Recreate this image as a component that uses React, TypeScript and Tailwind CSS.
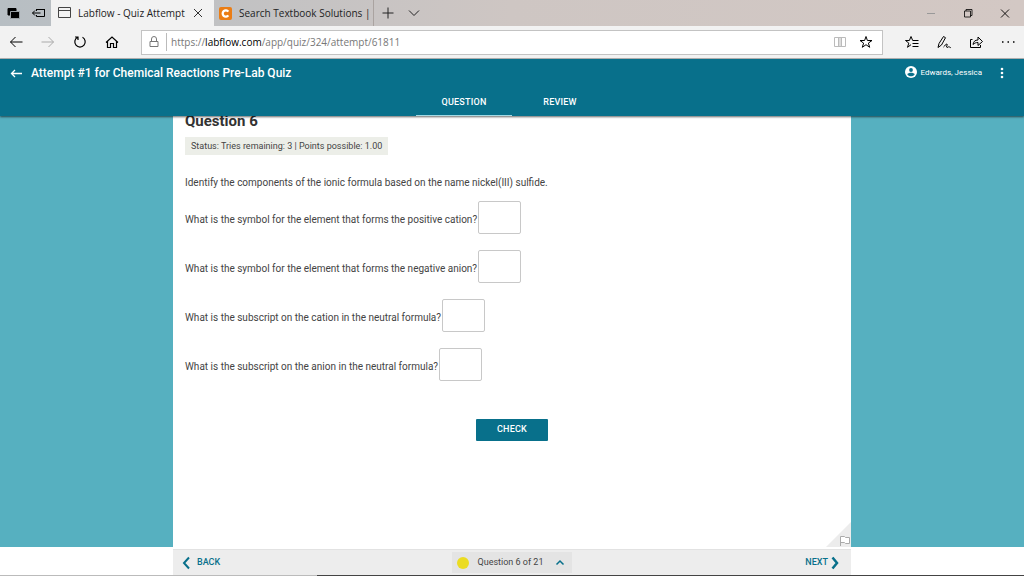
import type { ReactNode } from 'react'

interface IconProps {
  className?: string
  stroke?: number
  children: ReactNode
}

// every icon is drawn in a 16px box
function Icon({ className = '', stroke = 1, children }: IconProps) {
  return (
    <svg
      viewBox="0 0 16 16"
      fill="none"
      stroke="currentColor"
      strokeWidth={stroke}
      className={`size-4 shrink-0 ${className}`}
      aria-hidden="true"
    >
      {children}
    </svg>
  )
}

const questions = [
  { id: 'cation', text: 'What is the symbol for the element that forms the positive cation?' },
  { id: 'anion', text: 'What is the symbol for the element that forms the negative anion?' },
  { id: 'cation-sub', text: 'What is the subscript on the cation in the neutral formula?' },
  { id: 'anion-sub', text: 'What is the subscript on the anion in the neutral formula?' },
]

function TabStrip() {
  return (
    <div className="flex h-[26px] items-stretch bg-linear-to-r from-[#b7bec3] via-[#cec6c3] to-[#d3c8c4] text-[10px] text-[#222]">
      <div className="flex w-[51px] items-center gap-2.5 pl-[5px]">
        <button aria-label="Tabs set aside">
          <Icon>
            <path d="M3 3.500h8v6.500H3z" fill="#000" stroke="#000" />
            <path d="M5.500 6.500h9v7h-9z" fill="#000" stroke="#9ba1a5" />
          </Icon>
        </button>
        <button aria-label="Set tabs aside">
          <Icon className="text-black">
            <path d="M5.500 6V4.500h8v7h-8V10M5 4.500h9M1.500 8h8M4 5.500 1.500 8 4 10.500" />
          </Icon>
        </button>
      </div>

      <div className="flex w-[163px] items-center bg-[#f2f2f2] pl-1.5 pr-2">
        <Icon className="text-[#444]">
          <path d="M1.500 2.500h12v10h-12zM1.500 5.500h12" />
        </Icon>
        <span className="ml-[5px] flex-1 whitespace-nowrap">Labflow - Quiz Attempt</span>
        <button aria-label="Close tab">
          <Icon className="text-[#333]">
            <path d="m4 4 8 8M12 4l-8 8" />
          </Icon>
        </button>
      </div>

      <div className="flex w-[160px] items-center gap-[7px] border-r border-[#aaa3a0] pl-[5px]">
        <svg viewBox="0 0 13 13" className="size-[13px] shrink-0" aria-hidden="true">
          <rect width="13" height="13" rx="2" fill="#eb7d14" />
          <path d="M9.300 4.700A3.100 3.100 0 1 0 9.300 8.300" fill="none" stroke="#fff" strokeWidth="2.300" />
        </svg>
        <span className="whitespace-nowrap">Search Textbook Solutions |</span>
      </div>

      <div className="flex items-center gap-2.5 pl-1.5">
        <button aria-label="New tab">
          <Icon>
            <path d="M2.500 8h11M8 2.500v11" />
          </Icon>
        </button>
        <button aria-label="Tab previews">
          <Icon>
            <path d="m3 5.500 5 5 5-5" />
          </Icon>
        </button>
      </div>

      <div className="ml-auto flex items-center gap-[21px] pr-[11px]">
        <button aria-label="Minimize">
          <Icon className="text-[#999]">
            <path d="M4 8.500h8" />
          </Icon>
        </button>
        <button aria-label="Restore">
          <Icon className="text-black">
            <path d="M4.500 6h6v6h-6zM6 6V4.500h6v6h-1.500" strokeWidth="0.800" />
          </Icon>
        </button>
        <button aria-label="Close window">
          <Icon className="text-black">
            <path d="m4 4.500 8 8M12 4.500l-8 8" strokeWidth="0.900" />
          </Icon>
        </button>
      </div>
    </div>
  )
}

function AddressBar() {
  return (
    <div className="flex h-[33px] items-center border-b border-[#b5b5b5] bg-[#f2f2f2] text-black">
      <div className="flex w-[141px] items-center gap-4 pl-2">
        <button aria-label="Back">
          <Icon>
            <path d="M2.500 8h12M7.500 3l-5 5 5 5" />
          </Icon>
        </button>
        <button aria-label="Forward" className="text-[#aaa]">
          <Icon>
            <path d="M1.500 8h12M8.500 3l5 5-5 5" />
          </Icon>
        </button>
        <button aria-label="Refresh">
          <Icon stroke={1.200}>
            <path d="M5.500 3.300A5.200 5.200 0 1 0 10.500 3.300M3 3h3v3" />
          </Icon>
        </button>
        <button aria-label="Home">
          <Icon stroke={1.200}>
            <path d="M2 8.500 8 3l6 5.500M3.500 7.500v6h3V9.500h3v4h3v-6" />
          </Icon>
        </button>
      </div>

      <div className="flex h-[25px] flex-1 items-center border border-[#c3c3c3] bg-white pl-1 pr-2">
        <Icon className="text-[#777]">
          <path d="M4 7.500h8v5H4zM5.500 7V5a2.500 2.500 0 0 1 5 0v2" />
        </Icon>
        <span className="ml-1 h-[18px] border-l border-[#bbb]" />
        <a href="#" className="ml-1 flex-1 whitespace-nowrap text-[10px] text-[#777]">
          https://<span className="text-black">labflow.com</span>/app/quiz/324/attempt/61811
        </a>
        <button aria-label="Reading view" className="text-[#bbb]">
          <Icon>
            <path d="M2.500 3.500h11v9h-11zM8 3.500v9M6.500 4v8M9.500 4v8" />
          </Icon>
        </button>
        <button aria-label="Add to favorites" className="ml-2.5">
          <Icon>
            <path d="m8 2.500 1.400 4H14l-3.600 2.600 1.300 4.200L8 10.700l-3.700 2.600 1.300-4.200L2 6.500h4.600z" />
          </Icon>
        </button>
      </div>

      <div className="flex items-center gap-4 pl-[21px] pr-2">
        <button aria-label="Favorites">
          <Icon>
            <path d="M14.500 6.500H8.700L7 2.500l-1.600 4H1.500l3.300 2.600-1.300 4.200L7 10.700M8.500 9.500h6M8.500 12.500h6" />
          </Icon>
        </button>
        <button aria-label="Add notes">
          <Icon>
            <path d="M2 13.500 3 9.500 7.500 2.500l2 1.200L5.500 11 2 13.500M7.500 13c1.500-1 2.500-3.500 3.500-3s-1.500 3.500 0 3.500 1.500-1.500 2.500-.5 1 .5 1.500 0" />
          </Icon>
        </button>
        <button aria-label="Share">
          <Icon>
            <path d="M4.500 5.500h-2v8h10V11M5 10.500c.5-3 2-4.500 5-4.500V3l4.500 4.500L10 11.500v-3c-2 0-3.500.5-5 2z" />
          </Icon>
        </button>
        <button aria-label="More">
          <Icon>
            <path d="M2 8h1.500M7.500 8H9M13 8h1.500" stroke="#000" strokeWidth="1.500" />
          </Icon>
        </button>
      </div>
    </div>
  )
}

function AppHeader() {
  return (
    <header className="relative z-10 bg-[#08708b] text-white shadow-[0_1px_2px_rgba(0,0,0,0.6)]">
      <div className="flex h-7 items-center pl-2 pr-3.5">
        <button aria-label="Back to course">
          <Icon stroke={1.300}>
            <path d="M14 8.500H3.500M7 5 3.500 8.500 7 12" />
          </Icon>
        </button>
        <h1 className="ml-[7px] text-[12px] font-medium">Attempt #1 for Chemical Reactions Pre-Lab Quiz</h1>
        <button className="ml-auto flex items-center gap-px text-[8px]">
          <Icon>
            <circle cx="8" cy="7" r="6" fill="#fff" stroke="none" />
            <circle cx="8" cy="5" r="1.900" fill="#08708b" stroke="none" />
            <path d="M4.300 9.300c1-2 6.400-2 7.400 0-1.500 2.700-5.900 2.700-7.400 0z" fill="#08708b" stroke="none" />
          </Icon>
          Edwards, Jessica
        </button>
        <button aria-label="Menu" className="ml-3">
          <Icon>
            <g fill="#fff" stroke="none">
              <circle cx="8" cy="4" r="1.300" />
              <circle cx="8" cy="8" r="1.300" />
              <circle cx="8" cy="12" r="1.300" />
            </g>
          </Icon>
        </button>
      </div>
      <nav className="flex h-[29px] justify-center text-[9px] font-medium tracking-wide">
        <a href="#question" className="flex w-24 items-center justify-center border-b border-[#a5dbe6] pt-1">
          QUESTION
        </a>
        <a href="#review" className="flex w-24 items-center justify-center border-b border-transparent pt-1">
          REVIEW
        </a>
      </nav>
    </header>
  )
}

function QuestionPanel() {
  return (
    <section className="relative mx-auto w-full max-w-[678px] flex-1 bg-white px-3">
      <h2 className="-mt-1 text-[15px] font-bold leading-[18px] text-[#333]">Question 6</h2>
      <p className="mt-[7px] inline-block bg-[#eceee8] px-1.5 pt-px text-[9px] leading-[17px]">
        Status: Tries remaining: 3 | Points possible: 1.00
      </p>
      <p className="mt-[19px] text-[10px] leading-4">
        Identify the components of the ionic formula based on the name nickel(III) sulfide.
      </p>
      <form>
        <div className="mt-2.5 flex flex-col gap-4 text-[10px]">
          {questions.map((q) => (
            <div key={q.id} className="flex items-center gap-px">
              <label htmlFor={q.id} className="pt-1">{q.text}</label>
              <input id={q.id} type="text" className="h-[33px] w-[43px] rounded-xs border border-[#c8c8c8] bg-white px-2" />
            </div>
          ))}
        </div>
        <div className="mt-[38px] flex justify-center pb-6">
          <button type="button" className="h-[22px] w-[72px] rounded-[1px] bg-[#08708b] text-[9px] font-medium tracking-wide text-white">
            CHECK
          </button>
        </div>
      </form>

      {/* folded corner with the flag */}
      <button aria-label="Flag question" className="absolute bottom-0 right-0">
        <svg viewBox="0 0 25 25" className="block size-[25px]" aria-hidden="true">
          <path d="M25 0v25H0z" fill="#ececec" />
          <path d="M14.500 24v-9.500h4l1 1h4v6h-4l-1-1h-4" fill="#fff" stroke="#aaa" />
        </svg>
      </button>
    </section>
  )
}

function QuizFooter() {
  return (
    <footer className="bg-white">
      <div className="mx-auto flex h-[26px] w-full max-w-[678px] items-center justify-between border-t border-[#e2e2e2] bg-[#ededed] px-1.5 text-[9px]">
        <div className="flex flex-1">
          <button className="flex items-center gap-0.5 font-medium text-[#08708b]">
            <Icon stroke={2}>
              <path d="M10 2.500 5 8l5 5.500" />
            </Icon>
            BACK
          </button>
        </div>
        <button className="flex h-[21px] w-[120px] items-center bg-[#e4e4e4] px-1">
          <span className="ml-px size-3 rounded-full bg-[#ebdc22]" />
          <span className="flex-1 text-center">Question 6 of 21</span>
          <Icon stroke={1.500} className="text-[#08708b]">
            <path d="m4.500 9.500 3.500-3.500 3.500 3.500" />
          </Icon>
        </button>
        <div className="flex flex-1 justify-end">
          <button className="flex items-center gap-px font-medium text-[#08708b]">
            NEXT
            <Icon stroke={2.500}>
              <path d="M3.500 2.500 8 8l-4.500 5.500" />
            </Icon>
          </button>
        </div>
      </div>
      {/* taskbar edge */}
      <div className="flex h-px bg-[#444]">
        <span className="w-[31%] bg-[#bbb]" />
      </div>
    </footer>
  )
}

export default function App() {
  return (
    <div className="flex min-h-screen flex-col bg-white font-['Roboto',sans-serif] text-[#444]">
      <div className="font-['Open_Sans','Noto_Sans',sans-serif]">
        <TabStrip />
        <AddressBar />
      </div>
      <AppHeader />
      <main className="flex flex-1 flex-col bg-[#56b0c0]">
        <QuestionPanel />
      </main>
      <div className="h-0.5 bg-white" />
      <QuizFooter />
    </div>
  )
}
